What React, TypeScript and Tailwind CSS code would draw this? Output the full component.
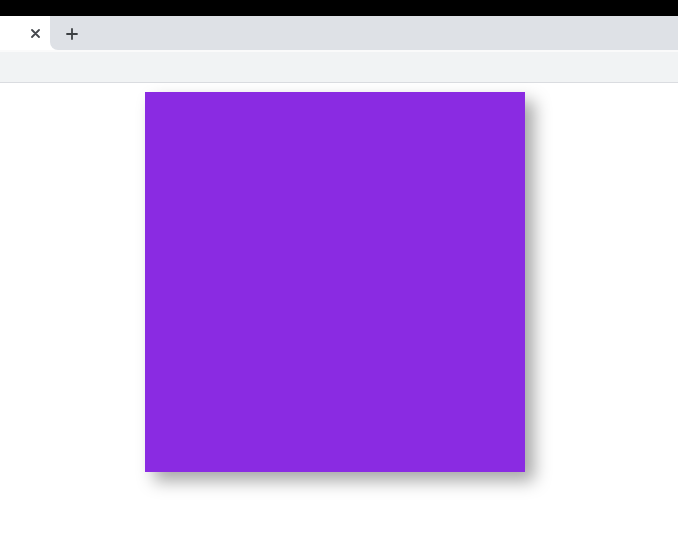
function App() {
    return (
        <div className="w-[678px] h-[536px] bg-white overflow-hidden font-['Liberation_Sans',sans-serif]">
            <div className="h-[16px] bg-black" />

            <div className="h-[34px] flex bg-white">
                <div className="w-[50px] flex items-center justify-end pr-[10px] pt-[1px]">
                    <svg width="9" height="9" viewBox="0 0 9 9">
                        <path d="M1 1 L8 8 M8 1 L1 8" stroke="#45484d" strokeWidth="1.8" strokeLinecap="round" />
                    </svg>
                </div>
                <div className="flex-1 bg-[#dee1e6] rounded-bl-[8px] flex items-center pl-[16px] pt-[1px]">
                    <svg width="12" height="12" viewBox="0 0 12 12">
                        <path d="M6 1 V11 M1 6 H11" stroke="#3c4043" strokeWidth="1.8" strokeLinecap="round" />
                    </svg>
                </div>
            </div>

            <div className="h-[2px] bg-[#fafafa]" />
            <div className="h-[31px] bg-[#f1f3f4] border-b border-[#dadce0]" />

            <div className="pt-[9px] pl-[145px]">
                <div className="w-[380px] h-[380px] bg-[#8a2be2] shadow-[9px_9px_16px_rgba(0,0,0,0.35)]" />
            </div>
        </div>
    );
}
export default App;
